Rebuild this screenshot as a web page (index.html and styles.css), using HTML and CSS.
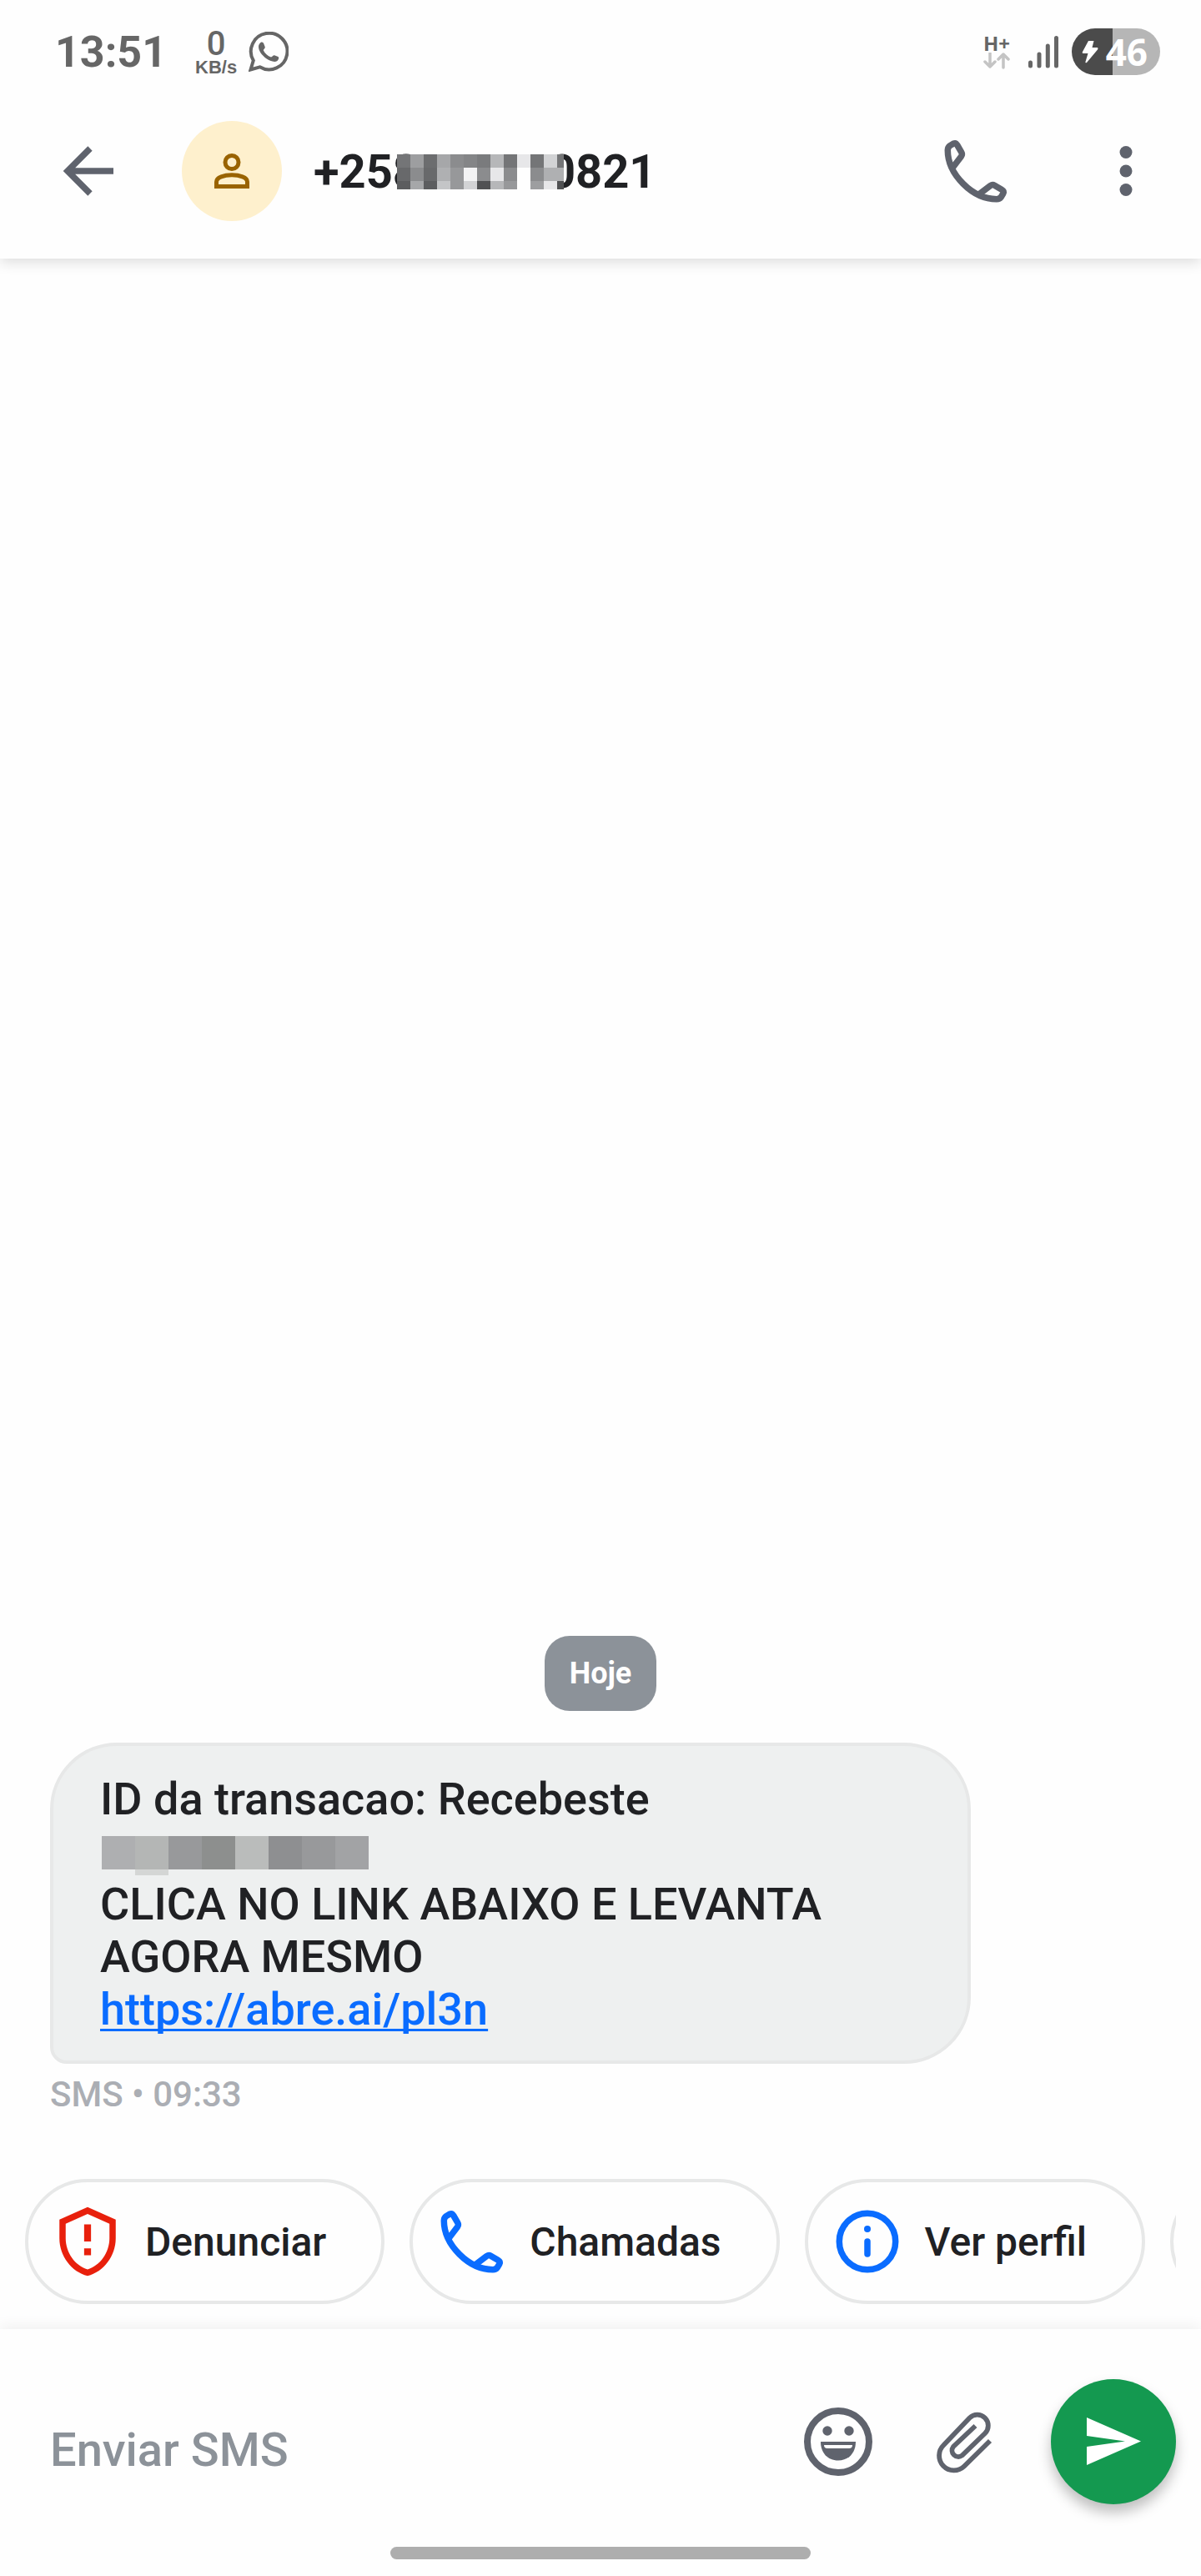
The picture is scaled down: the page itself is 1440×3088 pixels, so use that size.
FILE: index.html
```html
<!DOCTYPE html>
<html lang="pt">
<head>
  <meta charset="utf-8">
  <meta name="viewport" content="width=device-width, initial-scale=1">
  <title>Mensagens</title>
  <link rel="stylesheet" href="styles.css">
</head>
<body>
  <!-- shared icons -->
  <svg class="sprite" aria-hidden="true">
    <symbol id="icon-phone" viewBox="0 0 90 90">
      <path d="M18 40L27.5 27.5Q29.2 25 27.8 22.6L22.8 14Q21 10.8 18 12.2L14 14.6Q11.3 16.500 11.3 20C11.300 49 41 78.700 70 78.700Q73.500 78.700 75.400 76L77.800 72Q79.200 69 76 67.200L67.400 62.200Q65 60.800 62.500 62.500L50 72" fill="none" stroke="currentColor" stroke-width="7.5" stroke-linejoin="round"/>
    </symbol>
  </svg>

  <div class="top">
    <div class="status-bar">
      <span class="clock">13:51</span>
      <div class="net-speed">
        <span class="speed-value">0</span>
        <span class="speed-unit">KB/s</span>
      </div>
      <svg class="whatsapp" viewBox="0 0 48 48">
        <path d="M2.500 45.500L5.800 34.500A21.800 21.800 0 1 1 13.500 42.300Z" fill="none" stroke="currentColor" stroke-width="4"/>
        <path d="M14.500 13C16.500 12 18 13 18.500 15L19.800 18.500C20 20 18 21 17.800 22.200C19.500 26 23 29 27 30.500C28.500 30 29.500 28 31 28.200L35.500 30C37 31 36 34 34 35.300C31 37 25 35 21 32C16 28 12 23 12 18C12 16 13 14 14.500 13Z" fill="currentColor"/>
      </svg>
      <div class="status-right">
        <div class="network">
          <span class="network-type">H+</span>
          <svg class="network-arrows" viewBox="0 0 32 20">
            <path d="M8 1V17M2 11L8 17L14 11M24 18V2M18 8L24 2L30 8" fill="none" stroke="#c4c4c4" stroke-width="3.500" stroke-linecap="round" stroke-linejoin="round"/>
          </svg>
        </div>
        <svg class="signal" viewBox="0 0 36 40">
          <path d="M2.500 33V37M13 23V37M23.300 13V37M33.500 3.500V37" stroke="currentColor" stroke-width="5" stroke-linecap="round"/>
        </svg>
        <div class="battery">
          <svg class="bolt" viewBox="0 0 20 28">
            <path d="M8 1H14.500L12.500 9H19Q20 10 19 11.500L6 27Q4 28 4.500 26L7.500 16H1.500Q0 15.500 1 14Z" fill="currentColor"/>
          </svg>
          <span>46</span>
        </div>
      </div>
    </div>

    <header class="header">
      <button class="icon-button back" aria-label="Voltar">
        <svg viewBox="0 0 90 90">
          <path d="M76 45H20M48 18L21 45L48 72" fill="none" stroke="currentColor" stroke-width="7.500"/>
        </svg>
      </button>
      <div class="avatar">
        <svg viewBox="0 0 42 42">
          <circle cx="21" cy="10.500" r="8" fill="none" stroke="currentColor" stroke-width="5"/>
          <path d="M2.500 39.500V34C2.500 23 39.500 23 39.500 34V39.500Z" fill="none" stroke="currentColor" stroke-width="5"/>
        </svg>
      </div>
      <h1 class="contact">
        <span>+258</span>
        <svg class="number-mask" viewBox="0 0 200 42" shape-rendering="crispEdges">
          <path fill="#fefefe" d="M0 0h200v42H0z"/>
          <path fill="#747577" d="M0 0h16v16H0zM128 0h16v16h-16zM160 0h16v16h-16zM192 0h8v16h-8z"/>
          <path fill="#9d9ea0" d="M16 0h16v16H16zM160 32h16v10h-16z"/>
          <path fill="#6c6d6f" d="M32 0h16v16H32z"/>
          <path fill="#a6a7a9" d="M48 0h16v16H48zM16 32h16v10H16z"/>
          <path fill="#8b8c8e" d="M64 0h16v16H64zM16 16h16v16H16zM96 16h16v16H96zM128 16h16v16h-16zM160 16h16v16h-16z"/>
          <path fill="#848587" d="M80 0h16v16H80z"/>
          <path fill="#7a7b7d" d="M96 0h16v16H96z"/>
          <path fill="#b6b7b9" d="M112 0h16v16h-16zM112 32h16v10h-16z"/>
          <path fill="#e7e7e9" d="M144 0h16v16h-16zM112 16h16v16h-16zM176 32h16v10h-16z"/>
          <path fill="#d2d3d5" d="M176 0h16v16h-16zM80 32h16v10H80z"/>
          <path fill="#68696b" d="M0 16h16v16H0zM32 16h16v16H32z"/>
          <path fill="#afb0b2" d="M48 16h16v16H48zM176 16h24v16h-24z"/>
          <path fill="#97989a" d="M64 16h16v26H64zM128 32h16v10h-16z"/>
          <path fill="#f3f3f4" d="M80 16h16v16H80z"/>
          <path fill="#5c5d5f" d="M0 32h16v10H0zM32 32h16v10H32z"/>
          <path fill="#c4c5c7" d="M48 32h16v10H48z"/>
          <path fill="#505153" d="M96 32h16v10H96zM192 32h8v10h-8z"/>
        </svg>
        <span>0821</span>
      </h1>
      <button class="icon-button" aria-label="Ligar">
        <svg><use href="#icon-phone"/></svg>
      </button>
      <button class="icon-button" aria-label="Mais opções">
        <svg viewBox="0 0 90 90" fill="currentColor">
          <circle cx="45" cy="22.500" r="7.500"/>
          <circle cx="45" cy="45" r="7.500"/>
          <circle cx="45" cy="67.500" r="7.500"/>
        </svg>
      </button>
    </header>
  </div>

  <main class="conversation">
    <div class="date">Hoje</div>
    <p class="bubble">
      ID da transacao: Recebeste<br>
      <svg class="amount-mask" viewBox="0 0 320 47" shape-rendering="crispEdges">
        <path fill="#aeafb1" d="M0 0h40v40H0z"/>
        <path fill="#b4b6b5" d="M40 0h40v40H40z"/>
        <path fill="#d4d6d5" d="M40 40h40v7H40z"/>
        <path fill="#98999b" d="M80 0h40v40H80z"/>
        <path fill="#8d8f8e" d="M120 0h40v40h-40z"/>
        <path fill="#babcbb" d="M160 0h40v40h-40z"/>
        <path fill="#8e8f91" d="M200 0h40v40h-40z"/>
        <path fill="#98999b" d="M240 0h40v40h-40z"/>
        <path fill="#a2a3a5" d="M280 0h40v40h-40z"/>
      </svg><br>
      CLICA NO LINK ABAIXO E LEVANTA AGORA MESMO<br>
      <a href="#">https://abre.ai/pl3n</a>
    </p>
    <div class="meta">SMS • 09:33</div>
  </main>

  <div class="actions">
    <button class="chip">
      <svg class="report" viewBox="0 0 24 24" fill="currentColor">
        <path d="M12 1L3 5v6c0 5.550 3.840 10.740 9 12 5.160-1.260 9-6.450 9-12V5l-9-4zm7 10c0 4.520-2.980 8.690-7 9.930-4.020-1.240-7-5.410-7-9.930V6.300l7-3.110 7 3.110V11z"/>
        <path d="M10.900 6.500h2.200V12h-2.200zM10.900 14.200h2.200v2.200h-2.200z"/>
      </svg>
      Denunciar
    </button>
    <button class="chip">
      <svg><use href="#icon-phone"/></svg>
      Chamadas
    </button>
    <button class="chip">
      <svg viewBox="0 0 90 90">
        <circle cx="45" cy="45" r="33.700" fill="none" stroke="currentColor" stroke-width="7.500"/>
        <circle cx="45" cy="30" r="4" fill="currentColor"/>
        <path d="M45 45V60" stroke="currentColor" stroke-width="7.500" stroke-linecap="round"/>
      </svg>
      Ver perfil
    </button>
    <button class="chip" aria-label="Mais"><svg></svg></button>
  </div>

  <footer class="composer">
    <form class="compose-row">
      <input type="text" placeholder="Enviar SMS" aria-label="Enviar SMS">
      <button type="button" class="icon-button" aria-label="Emoji">
        <svg viewBox="0 0 90 90">
          <circle cx="45" cy="45" r="37" fill="none" stroke="currentColor" stroke-width="8"/>
          <circle cx="32" cy="32" r="5.700" fill="currentColor"/>
          <circle cx="58" cy="32" r="5.700" fill="currentColor"/>
          <path d="M24 45H66C66 58 58 67.500 45 67.500S24 58 24 45Z" fill="currentColor"/>
          <path d="M28 49H62Q62 53 58 53H32Q28 53 28 49Z" fill="#fefefe"/>
        </svg>
      </button>
      <button type="button" class="icon-button" aria-label="Anexar">
        <svg viewBox="0 0 90 90">
          <path d="M77 44L46 74.500A17.500 17.500 0 0 1 21.500 49L52.500 16.500A12 12 0 0 1 71 35L43.500 61.500A7.500 7.500 0 0 1 33 51L59.500 26" fill="none" stroke="currentColor" stroke-width="5.800"/>
        </svg>
      </button>
      <button type="button" class="send" aria-label="Enviar">
        <svg viewBox="0 0 150 150">
          <path d="M43 46L108 74.500L43 103V81L89 74.500L43 68Z" fill="currentColor"/>
        </svg>
      </button>
    </form>
    <div class="nav-pill"></div>
  </footer>
</body>
</html>
```

FILE: styles.css
```css
* {
  box-sizing: border-box;
}

body {
  margin: 0;
  min-height: 100vh;
  display: flex;
  flex-direction: column;
  background-color: #fefefe;
  font-family: Roboto, sans-serif;
  font-weight: 500;
  color: #202124;
}

svg {
  display: block;
  flex: none;
}

button {
  border: 0;
  padding: 0;
  background: none;
  font: inherit;
  color: inherit;
  cursor: pointer;
}

.sprite {
  position: absolute;
  width: 0;
  height: 0;
}

.top {
  box-shadow: 0 4px 16px rgba(0, 0, 0, 0.14);
}

/* Status bar */
.status-bar {
  height: 100px;
  padding: 24px 49px 0 66px;
  display: flex;
  align-items: center;
  color: #666666;
}

.clock {
  font-size: 52px;
  font-weight: 700;
}

.net-speed {
  margin: 0 14px 0 34px;
  padding-top: 4px;
  display: flex;
  flex-direction: column;
  align-items: center;
}

.speed-value {
  font-size: 40px;
  line-height: 34px;
}

.speed-unit {
  font-family: "Liberation Sans", sans-serif;
  font-size: 22px;
  line-height: 22px;
  font-weight: 700;
}

.whatsapp {
  width: 48px;
  height: 48px;
}

.status-right {
  margin-left: auto;
  display: flex;
  align-items: center;
}

.network {
  width: 32px;
  margin-right: 22px;
}

.network-type {
  display: block;
  font-family: "Open Sans", sans-serif;
  font-size: 24px;
  line-height: 22px;
  font-weight: 700;
}

.network-arrows {
  width: 32px;
  height: 20px;
}

.signal {
  width: 36px;
  height: 40px;
  margin-right: 16px;
}

.battery {
  width: 106px;
  height: 56px;
  padding: 0 15px 0 12px;
  border-radius: 28px;
  display: flex;
  align-items: center;
  justify-content: space-between;
  background: linear-gradient(to right, #4b4b4b 46%, #b6b6b6 46%);
  color: #ffffff;
  font-family: "Open Sans", sans-serif;
  font-size: 44px;
  font-weight: 700;
}

.bolt {
  width: 20px;
  height: 28px;
}

/* Header */
.header {
  height: 210px;
  padding: 0 45px 0 60px;
  display: flex;
  align-items: center;
}

.icon-button {
  width: 90px;
  height: 90px;
  flex: none;
  color: #5f636d;
}

.icon-button svg {
  width: 90px;
  height: 90px;
}

.header .icon-button + .icon-button {
  margin-left: 90px;
}

.avatar {
  width: 120px;
  height: 120px;
  margin: 0 38px 0 68px;
  border-radius: 50%;
  display: flex;
  align-items: center;
  justify-content: center;
  background-color: #fef0cd;
  color: #996300;
}

.avatar svg {
  width: 42px;
  height: 42px;
}

.contact {
  flex: 1;
  margin: 0;
  padding-top: 2px;
  display: flex;
  align-items: center;
  font-size: 56px;
  font-weight: 700;
}

.number-mask {
  position: relative;
  width: 200px;
  height: 42px;
  margin: 0 -18px 0 -27px;
}

/* Messages */
.conversation {
  flex: 1;
  padding: 30px 60px 76px;
  display: flex;
  flex-direction: column;
  align-items: flex-start;
  justify-content: flex-end;
}

.date {
  align-self: center;
  padding: 0 30px;
  border-radius: 30px;
  background-color: #8c9299;
  color: #ffffff;
  font-size: 36px;
  line-height: 90px;
  font-weight: 700;
}

.bubble {
  max-width: 1104px;
  margin: 38px 0 12px;
  padding: 32px 56px 30px;
  border: 4px solid #e7e8e8;
  border-radius: 80px 80px 80px 20px;
  background-color: #eef0f0;
  font-size: 54px;
  line-height: 63px;
}

.bubble a {
  color: #0a6cff;
  text-decoration-thickness: 3px;
  text-underline-offset: 5px;
  text-decoration-skip-ink: none;
}

.amount-mask {
  display: inline-block;
  width: 320px;
  height: 47px;
  margin: 13px 2px 3px;
  vertical-align: top;
}

.meta {
  color: #abaeb4;
  font-size: 42px;
  line-height: 50px;
}

/* Quick actions */
.actions {
  margin: 0 30px;
  padding-bottom: 30px;
  display: flex;
  gap: 30px;
  overflow: hidden;
}

.chip {
  flex: none;
  height: 150px;
  padding: 0 66px 0 26px;
  border: 4px solid #e7e8e8;
  border-radius: 75px;
  display: flex;
  align-items: center;
  gap: 24px;
  font-size: 48px;
}

.chip svg {
  width: 90px;
  height: 90px;
  color: #0a6cff;
}

.chip .report {
  color: #e8200c;
}

/* Composer */
.composer {
  padding: 60px 30px 20px;
  box-shadow: 0 -4px 16px rgba(0, 0, 0, 0.06);
}

.compose-row {
  margin: 0 0 51px;
  display: flex;
  align-items: center;
  gap: 60px;
}

.compose-row input {
  flex: 1;
  min-width: 0;
  padding: 20px 0 0 30px;
  border: 0;
  outline: 0;
  background: none;
  font: inherit;
  font-size: 56px;
  color: #202124;
}

.compose-row input::placeholder {
  color: #8c9299;
  opacity: 1;
}

.send {
  width: 150px;
  height: 150px;
  flex: none;
  border-radius: 50%;
  background-color: #149950;
  color: #ffffff;
  box-shadow: 0 10px 16px rgba(0, 0, 0, 0.25);
}

.nav-pill {
  width: 504px;
  max-width: 60%;
  height: 15px;
  margin: 0 auto;
  border-radius: 8px;
  background-color: #aeaeae;
}
```
